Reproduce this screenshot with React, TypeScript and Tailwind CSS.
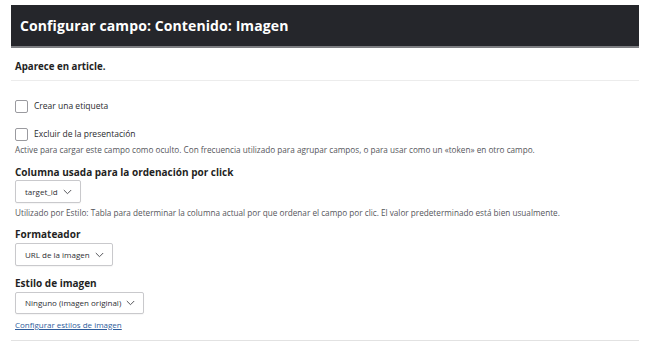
const font = { fontFamily: '"Open Sans", "Noto Sans", sans-serif' };

function Checkbox({ label, className }: { label: string; className: string }) {
  return (
    <div className={`flex items-center h-[14px] ${className}`}>
      <span className="w-[13px] h-[13px] border border-[#9a9a9f] rounded-[2px] bg-white" />
      <span className="ml-[6px] text-[8.5px] leading-[14px] text-[#2a2a2e]">{label}</span>
    </div>
  );
}

function Select({ value, className }: { value: string; className: string }) {
  return (
    <div
      className={`inline-flex items-center self-start border border-[#c9c9cc] rounded-[2px] bg-white pl-[9px] pr-[8px] shadow-[0_1px_1px_rgba(0,0,0,0.04)] ${className}`}
    >
      <span className="text-[8px] leading-[12px] text-[#2e2e33]">{value}</span>
      <svg className="ml-[5px] text-[#55565b]" width="9" height="6" viewBox="0 0 9 6" fill="none">
        <path d="M0.8 1 L4.5 4.7 L8.2 1" stroke="currentColor" strokeWidth="1" />
      </svg>
    </div>
  );
}

export default function App() {
  return (
    <div className="w-[650px] h-[350px] bg-white pt-[5px] px-[11px] overflow-hidden" style={font}>
      <div className="h-[43px] bg-[#25262b] border-b-2 border-[#7d7e82] flex items-center pl-[9px]">
        <h1 className="text-[14px] font-bold text-white tracking-[0.1px]">
          Configurar campo: Contenido: Imagen
        </h1>
      </div>

      <div className="flex flex-col pl-[4px]">
        <div className="-ml-[4px] pl-[4px] pt-[12px] pb-[7px] border-b border-[#ececec]">
          <p className="text-[9.7px] leading-[13px] font-bold text-[#1f1f23]">Aparece en article.</p>
        </div>

        <Checkbox label="Crear una etiqueta" className="mt-[18px]" />
        <Checkbox label="Excluir de la presentación" className="mt-[14px]" />
        <p className="mt-[3px] text-[8.2px] leading-[12px] text-[#55565b]">
          Active para cargar este campo como oculto. Con frecuencia utilizado para agrupar campos, o para usar
          como un «token» en otro campo.
        </p>

        <p className="mt-[10px] text-[10px] leading-[13px] font-bold text-[#1f1f23]">
          Columna usada para la ordenación por click
        </p>
        <Select value="target_id" className="mt-[1px] h-[23px]" />
        <p className="mt-[4px] text-[8.2px] leading-[12px] text-[#55565b]">
          Utilizado por Estilo: Tabla para determinar la columna actual por que ordenar el campo por clic. El valor
          predeterminado está bien usualmente.
        </p>

        <p className="mt-[9px] text-[10px] leading-[13px] font-bold text-[#1f1f23]">Formateador</p>
        <Select value="URL de la imagen" className="mt-[2px] h-[23px]" />

        <p className="mt-[11px] text-[10px] leading-[13px] font-bold text-[#1f1f23]">Estilo de imagen</p>
        <Select value="Ninguno (imagen original)" className="mt-[2px] h-[22px]" />
        <a href="#" className="mt-[5px] self-start text-[8px] leading-[12px] text-[#2f5d9c] underline">
          Configurar estilos de imagen
        </a>

        <div className="-ml-[4px] mt-[9px] border-t border-[#e2e2e2]" />
      </div>
    </div>
  );
}
